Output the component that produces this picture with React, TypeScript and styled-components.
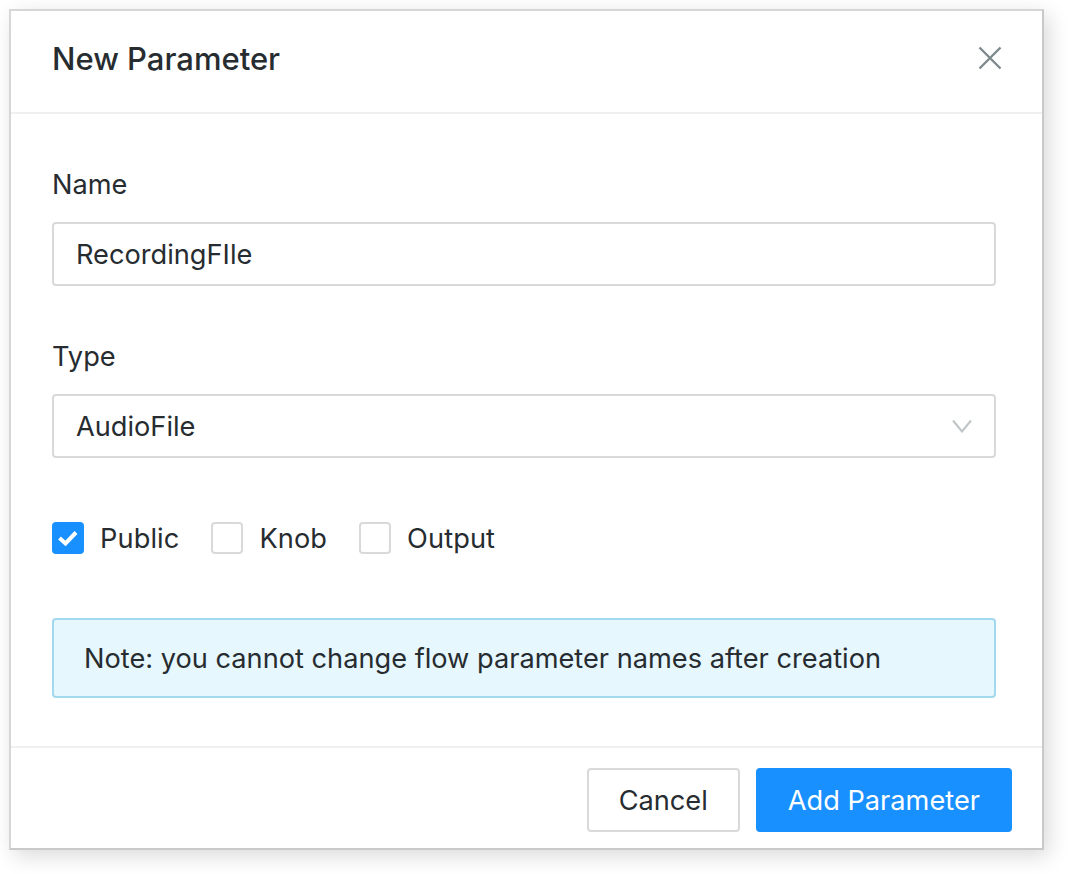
import React from "react";
import styled, { createGlobalStyle } from "styled-components";

const Global = createGlobalStyle`
  html, body { margin: 0; padding: 0; background: #fff; }
  body { font-family: Inter, "Liberation Sans", sans-serif; color: #262c30; }
  * { box-sizing: border-box; }
`;

const Page = styled.div`
  padding: 9px 24px 24px 9px;
`;

const Modal = styled.div`
  width: 1035px;
  height: 841px;
  background: #fff;
  border: 2px solid #d6d6d6;
  border-right-color: #c9c9c9;
  border-bottom-color: #c9c9c9;
  box-shadow: 5px 6px 20px rgba(0, 0, 0, 0.15);
  display: flex;
  flex-direction: column;
`;

const Header = styled.header`
  height: 103px;
  flex: none;
  padding: 0 41px 6px;
  display: flex;
  align-items: center;
  justify-content: space-between;
  border-bottom: 2px solid #f0f0f0;
`;

const Title = styled.h1`
  margin: 0;
  font-size: 31px;
  font-weight: 500;
  line-height: 40px;
  color: #262c30;
`;

const CloseButton = styled.button`
  border: 0;
  padding: 0;
  background: none;
  display: flex;
  margin: 0 -1px 2px 0;
`;

const Body = styled.div`
  flex: 1;
  padding: 48px 46px 48px 41px;
  display: flex;
  flex-direction: column;
`;

const Field = styled.div`
  margin-bottom: 48px;
`;

const Label = styled.div`
  font-size: 27.2px;
  line-height: 46px;
  margin-bottom: 14px;
`;

const Control = styled.div`
  height: 64px;
  border: 2px solid #d9d9d9;
  border-radius: 4px;
  padding: 0 22px;
  display: flex;
  align-items: center;
  justify-content: space-between;
  font-size: 27.2px;
`;

const Checks = styled.div`
  display: flex;
  gap: 32px;
  margin-top: 16px;
  margin-bottom: 64px;
`;

const CheckItem = styled.label`
  display: flex;
  align-items: center;
  gap: 16px;
  font-size: 27.2px;
`;

const CheckText = styled.span`
  display: block;
  height: 32px;
  line-height: 34px;
  letter-spacing: 0.1px;
`;

const Box = styled.span<{ $on?: boolean }>`
  width: 32px;
  height: 32px;
  border-radius: 4px;
  display: flex;
  align-items: center;
  justify-content: center;
  background: ${(p) => (p.$on ? "#1890ff" : "#fff")};
  border: 2px solid ${(p) => (p.$on ? "#1890ff" : "#d9d9d9")};
`;

const Note = styled.div`
  height: 80px;
  border: 2px solid #a3d9ee;
  border-radius: 4px;
  background: #e6f7fe;
  padding: 0 30px;
  display: flex;
  align-items: center;
  font-size: 27.2px;
`;

const Footer = styled.footer`
  flex: none;
  height: 102px;
  border-top: 2px solid #f0f0f0;
  padding: 20px 30px 0 0;
  display: flex;
  justify-content: flex-end;
  gap: 16px;
`;

const Button = styled.button<{ $primary?: boolean }>`
  height: 64px;
  border-radius: 4px;
  font-family: inherit;
  font-size: 27.2px;
  padding: 0 30px;
  color: ${(p) => (p.$primary ? "#fff" : "#262c30")};
  background: ${(p) => (p.$primary ? "#1890ff" : "#fff")};
  border: 2px solid ${(p) => (p.$primary ? "#1890ff" : "#d9d9d9")};
`;

export default function App() {
  return (
    <Page>
      <Global />
      <Modal>
        <Header>
          <Title>New Parameter</Title>
          <CloseButton aria-label="Close">
            <svg width="24" height="24" viewBox="0 0 24 24" fill="none" stroke="#7f8a8d" strokeWidth="2.4">
              <path d="M1.5 1.5 22.5 22.5M22.5 1.5 1.5 22.5" />
            </svg>
          </CloseButton>
        </Header>
        <Body>
          <Field>
            <Label>Name</Label>
            <Control>RecordingFIle</Control>
          </Field>
          <Field>
            <Label>Type</Label>
            <Control>
              AudioFile
              <svg width="20" height="14" viewBox="0 0 20 14" fill="none" stroke="#bfc4c7" strokeWidth="2">
                <path d="M1 1.5 10 12.5 19 1.5" />
              </svg>
            </Control>
          </Field>
          <Checks>
            <CheckItem>
              <Box $on>
                <svg width="20" height="16" viewBox="0 0 20 16" fill="none" stroke="#fff" strokeWidth="4">
                  <path d="M1.5 8 7.5 13.5 18 2.5" />
                </svg>
              </Box>
              <CheckText>Public</CheckText>
            </CheckItem>
            <CheckItem>
              <Box />
              <CheckText>Knob</CheckText>
            </CheckItem>
            <CheckItem>
              <Box />
              <CheckText>Output</CheckText>
            </CheckItem>
          </Checks>
          <Note>Note: you cannot change flow parameter names after creation</Note>
        </Body>
        <Footer>
          <Button>Cancel</Button>
          <Button $primary>Add Parameter</Button>
        </Footer>
      </Modal>
    </Page>
  );
}
